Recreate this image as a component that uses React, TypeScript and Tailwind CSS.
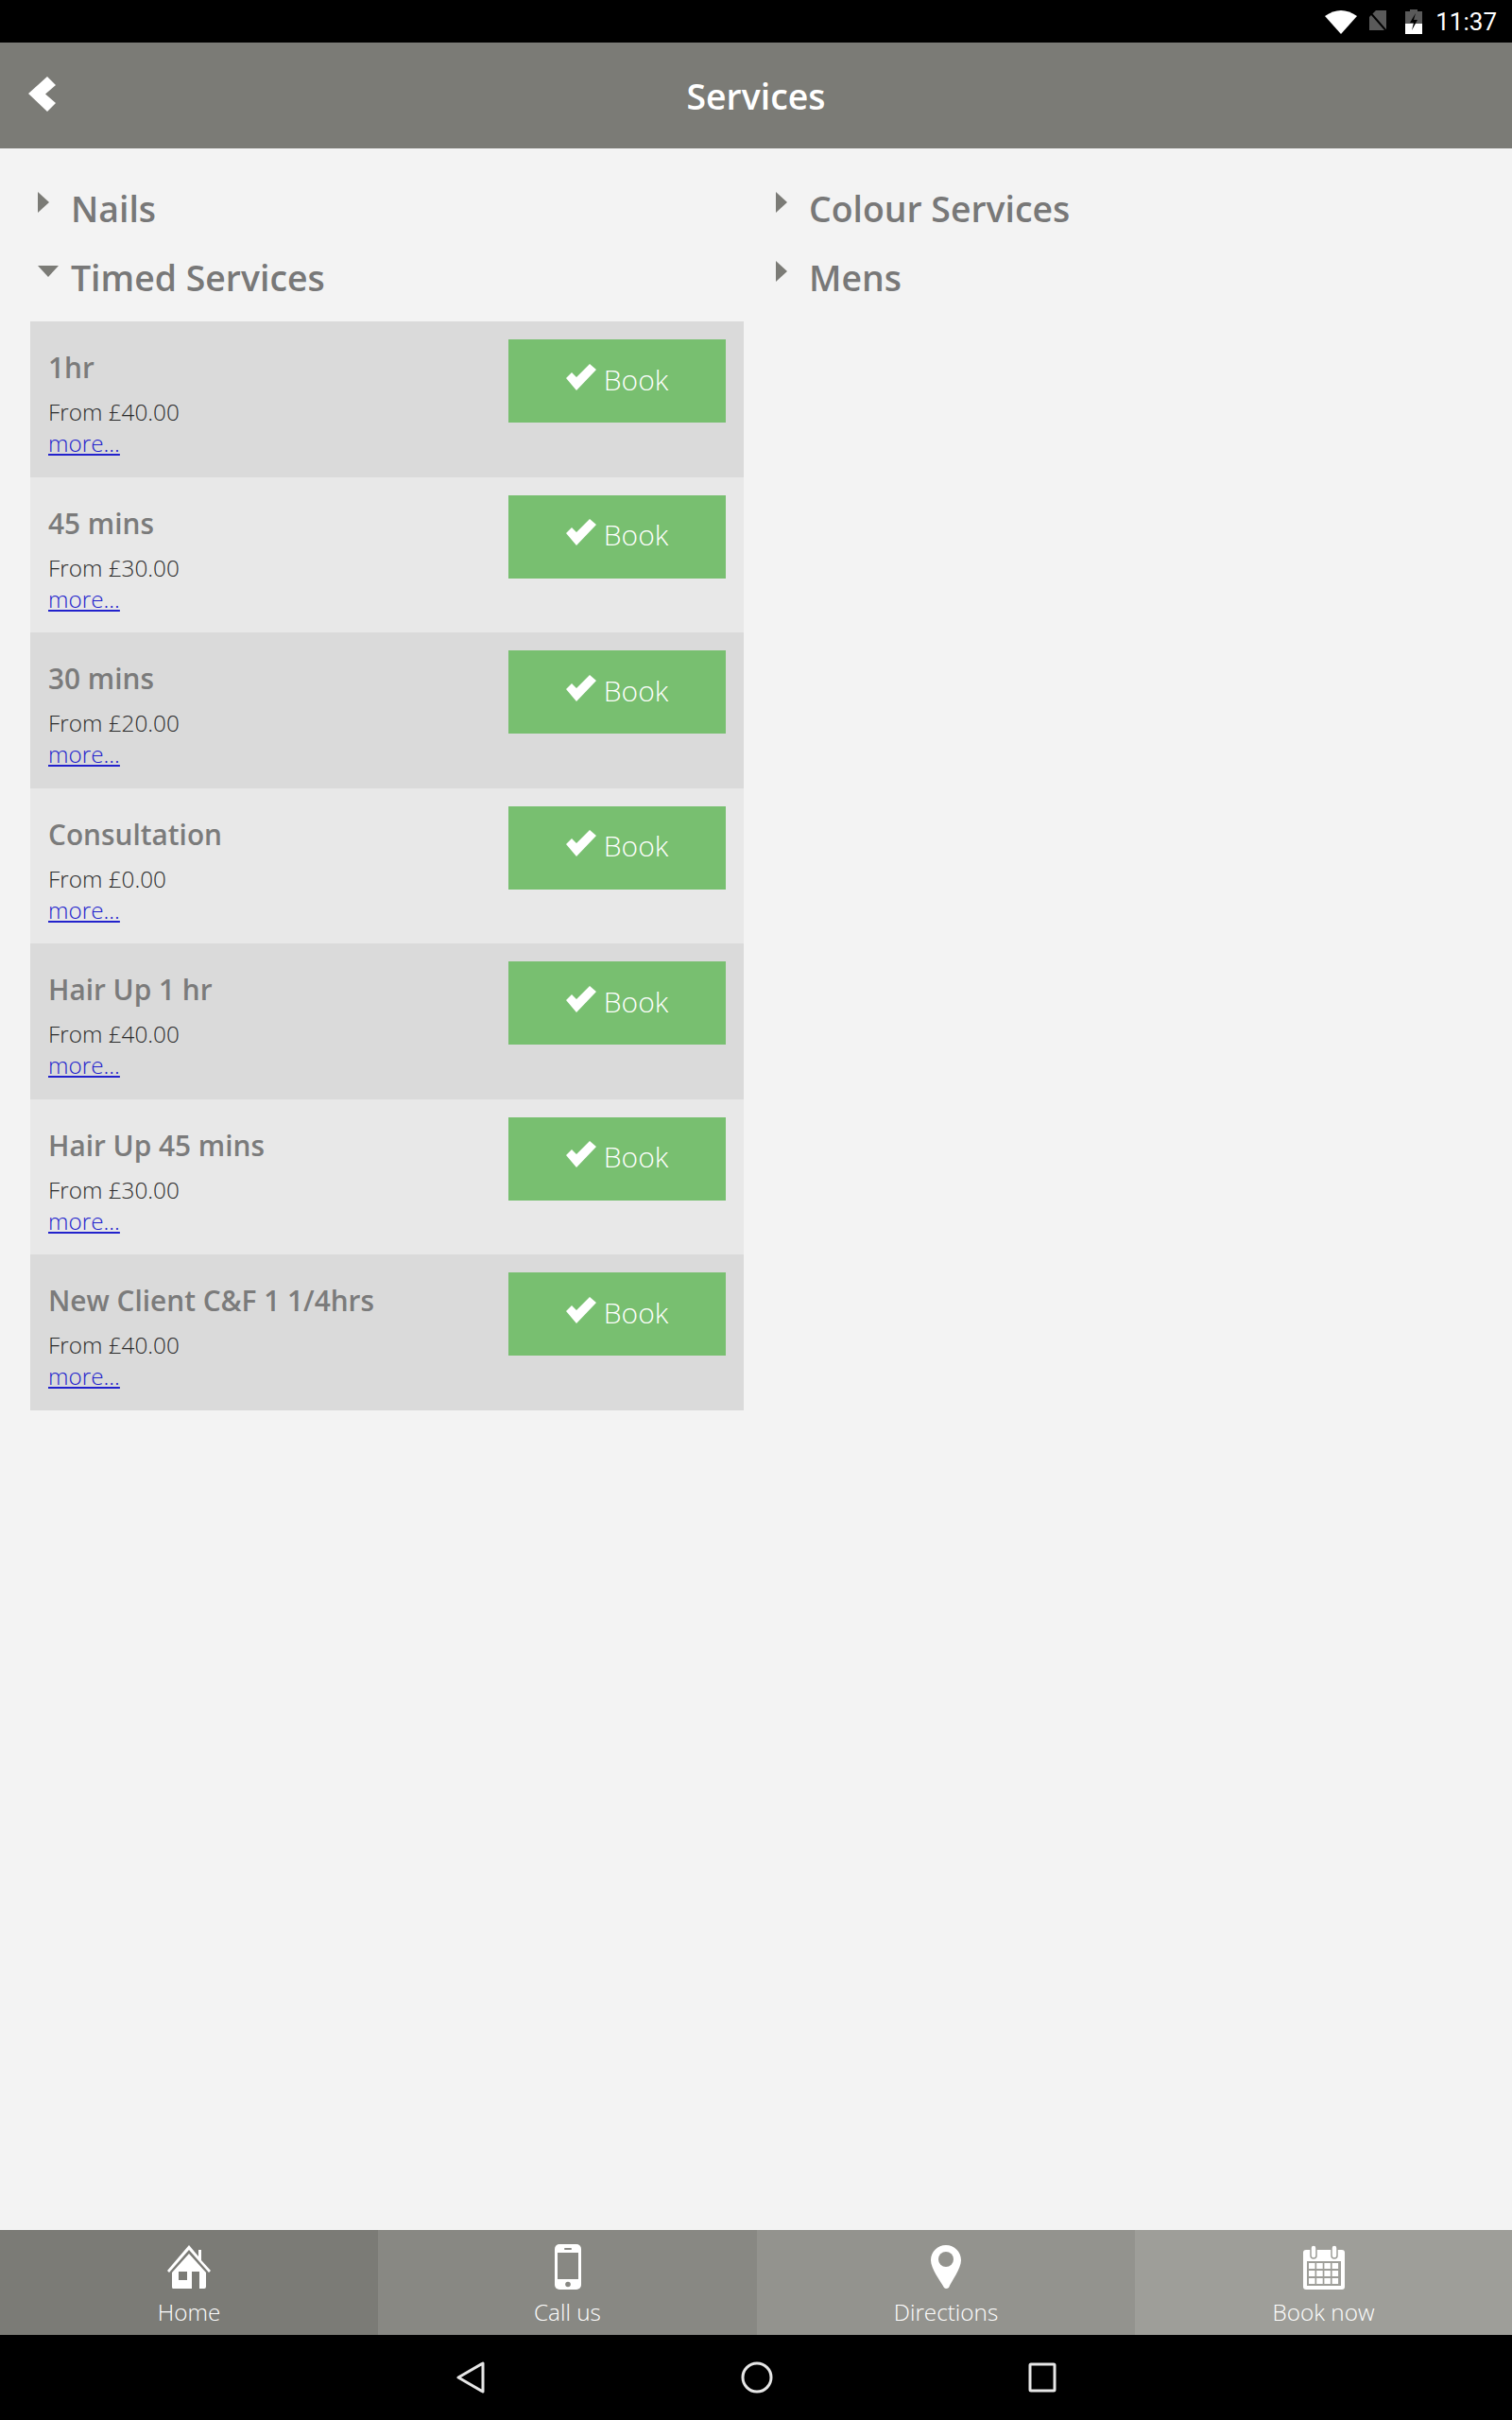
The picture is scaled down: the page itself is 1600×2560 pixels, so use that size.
const services = [
  { name: "1hr", price: "From £40.00" },
  { name: "45 mins", price: "From £30.00" },
  { name: "30 mins", price: "From £20.00" },
  { name: "Consultation", price: "From £0.00" },
  { name: "Hair Up 1 hr", price: "From £40.00" },
  { name: "Hair Up 45 mins", price: "From £30.00" },
  { name: "New Client C&F 1 1/4hrs", price: "From £40.00" },
]

function ArrowRight() {
  return (
    <svg width="12" height="22" viewBox="0 0 12 22" className="block">
      <path d="M0 0 L12 11 L0 22 Z" fill="#7b7b76" />
    </svg>
  )
}

function ArrowDown() {
  return (
    <svg width="22" height="12" viewBox="0 0 22 12" className="block">
      <path d="M0 0 H22 L11 12 Z" fill="#7b7b76" />
    </svg>
  )
}

function Heading({ title, open }: { title: string; open?: boolean }) {
  return (
    <div className="relative h-[73px] pl-[35px] text-[37.4px] leading-[73px] font-semibold text-[#787878]">
      <span className={open ? "absolute left-0 top-[24px]" : "absolute left-0 top-[19px]"}>
        {open ? <ArrowDown /> : <ArrowRight />}
      </span>
      {title}
    </div>
  )
}

function CheckIcon() {
  return (
    <svg width="32" height="28" viewBox="0 0 32 28" className="mb-[5px] block" fill="white">
      <path d="M0 15 L6 9 L11 14 L25 0 L32 6 L11 28 Z" />
    </svg>
  )
}

function ServiceRow({ name, price, dark }: { name: string; price: string; dark: boolean }) {
  return (
    <div className={`flex h-[164.5px] justify-between pt-[19px] pr-[19px] pl-[18px] ${dark ? "bg-[#dadada]" : "bg-[#e8e8e8]"}`}>
      <div className="pl-[1px]">
        <div className="mt-[13px] text-[29.8px] leading-[34px] font-semibold text-[#7b7b7b]">{name}</div>
        <div className="mt-[14px] text-[24.3px] leading-[32px] font-light text-[#2b2b2b]">{price}</div>
        <a className="mt-[1px] block text-[24.3px] leading-[32px] font-light text-[#2222cc] underline">more...</a>
      </div>
      <button className="flex h-[88px] w-[230px] items-center justify-center gap-[8px] bg-[#78bf70] pb-[4px] text-[30px] font-light text-white">
        <CheckIcon />
        Book
      </button>
    </div>
  )
}

function HomeIcon() {
  return (
    <svg width="46" height="46" viewBox="0 0 46 46" fill="white" className="block">
      <path d="M23 0 L33 12 V5 H36 V16 L46 27 L44 29 L23 5 L2 29 L0 27 Z" />
      <path fillRule="evenodd" d="M23 9 L41 29 V44 Q41 46 39 46 H6 Q5 46 5 44 V29 Z M12 28 V37 H21 V28 Z M26 28 V46 H34 V28 Z" />
    </svg>
  )
}

function PhoneIcon() {
  return (
    <svg width="28" height="48" viewBox="0 0 28 48" className="block">
      <rect x="0" y="0" width="28" height="48" rx="5" fill="white" />
      <rect x="3" y="9" width="22" height="28" fill="#888883" />
      <rect x="10" y="4" width="8" height="2" rx="1" fill="#888883" />
      <circle cx="14" cy="42.5" r="2.8" fill="#888883" />
    </svg>
  )
}

function PinIcon() {
  return (
    <svg width="32" height="46" viewBox="0 0 32 46" className="block">
      <path d="M16 0 C25 0 32 7 32 16 C32 25 22 38 19 45 Q16 47 14 45 C10 38 0 25 0 16 C0 7 7 0 16 0 Z" fill="white" />
      <circle cx="16" cy="15" r="8" fill="#93938e" />
    </svg>
  )
}

function CalendarIcon() {
  const cells = [0, 1, 2, 3]
  const rows = [0, 1, 2]
  return (
    <svg width="44" height="47" viewBox="0 0 44 47" className="block">
      <rect x="0" y="5" width="44" height="42" rx="3" fill="white" />
      <rect x="8" y="0" width="6" height="14" rx="3" fill="white" stroke="#9e9e99" strokeWidth="1.5" />
      <rect x="30" y="0" width="6" height="14" rx="3" fill="white" stroke="#9e9e99" strokeWidth="1.5" />
      <rect x="4" y="17" width="36" height="26" fill="#9e9e99" />
      {rows.map((r) =>
        cells.map((c) => <rect key={`${r}-${c}`} x={6 + c * 8.2} y={19 + r * 8} width="6.5" height="6" fill="white" />)
      )}
    </svg>
  )
}

const navItems = [
  { label: "Home", color: "bg-[#7b7b76]", icon: <HomeIcon /> },
  { label: "Call us", color: "bg-[#888883]", icon: <PhoneIcon /> },
  { label: "Directions", color: "bg-[#93938e]", icon: <PinIcon /> },
  { label: "Book now", color: "bg-[#9e9e99]", icon: <CalendarIcon /> },
]

export default function App() {
  return (
    <div className="flex h-[2560px] w-[1600px] flex-col overflow-hidden bg-[#f3f3f3] font-['Open_Sans',sans-serif]">
      {/* status bar */}
      <div className="flex h-[45px] items-center justify-end bg-black pr-[16px]">
        <svg width="34" height="26" viewBox="0 0 34 26" className="mr-[11px]">
          <path d="M0 7 Q17 -5 34 7 L17 26 Z" fill="white" />
        </svg>
        <svg width="22" height="25" viewBox="0 0 22 25" className="mr-[18px]">
          <path d="M9 1 H20 V22 H2 V8 Z" fill="#5a5a5a" />
          <path d="M1 1 L22 25" stroke="black" strokeWidth="2" />
        </svg>
        <svg width="18" height="27" viewBox="0 0 18 27" className="mr-[14px]">
          <path d="M5 3 V1 H13 V3 H18 V27 H0 V3 Z" fill="#5a5a5a" />
          <path d="M0 16 H18 V27 H0 Z" fill="white" />
          <path d="M11 5 L5 15 H9 L7 23 L13 12 H9 Z" fill="black" />
        </svg>
        <span className="font-['Roboto',sans-serif] text-[26px] leading-none text-white">11:37</span>
      </div>

      {/* header */}
      <div className="relative flex h-[112px] items-center justify-center bg-[#7b7b76]">
        <svg width="30" height="37" viewBox="0 0 30 37" fill="white" className="absolute top-[36px] left-[30px]">
          <path d="M0 18 L20 0 L29 9 L18 18.5 L29 28 L20 37 Z" />
        </svg>
        <span className="mt-[3px] text-[37.4px] font-semibold text-white">Services</span>
      </div>

      {/* service groups */}
      <div className="grid flex-1 grid-cols-2 content-start pt-[27px]">
        <div className="pr-[13px] pl-[32px]">
          <div className="mb-[10px] pl-[8px]">
            <Heading title="Nails" />
            <Heading title="Timed Services" open />
          </div>
          {services.map((s, i) => (
            <ServiceRow key={s.name} name={s.name} price={s.price} dark={i % 2 === 0} />
          ))}
        </div>
        <div className="pl-[21px]">
          <Heading title="Colour Services" />
          <Heading title="Mens" />
        </div>
      </div>

      {/* bottom nav */}
      <div className="grid h-[111px] grid-cols-[400px_401px_400px_399px]">
        {navItems.map((n) => (
          <div key={n.label} className={`flex flex-col items-center pt-[15px] ${n.color}`}>
            <div className="flex h-[48px] items-center">{n.icon}</div>
            <span className="mt-[8px] text-[24.3px] leading-[32px] font-light text-white">{n.label}</span>
          </div>
        ))}
      </div>

      {/* android nav */}
      <div className="flex h-[90px] items-center justify-center gap-[270px] bg-black">
        <svg width="32" height="36" viewBox="0 0 32 36">
          <path d="M29 3 V33 L3 18 Z" fill="none" stroke="#e6e6e6" strokeWidth="3" strokeLinejoin="round" />
        </svg>
        <svg width="34" height="34" viewBox="0 0 34 34">
          <circle cx="17" cy="17" r="15" fill="none" stroke="#e6e6e6" strokeWidth="3" />
        </svg>
        <svg width="30" height="32" viewBox="0 0 30 32">
          <rect x="2" y="2" width="26" height="28" rx="1" fill="none" stroke="#e6e6e6" strokeWidth="3" />
        </svg>
      </div>
    </div>
  )
}
